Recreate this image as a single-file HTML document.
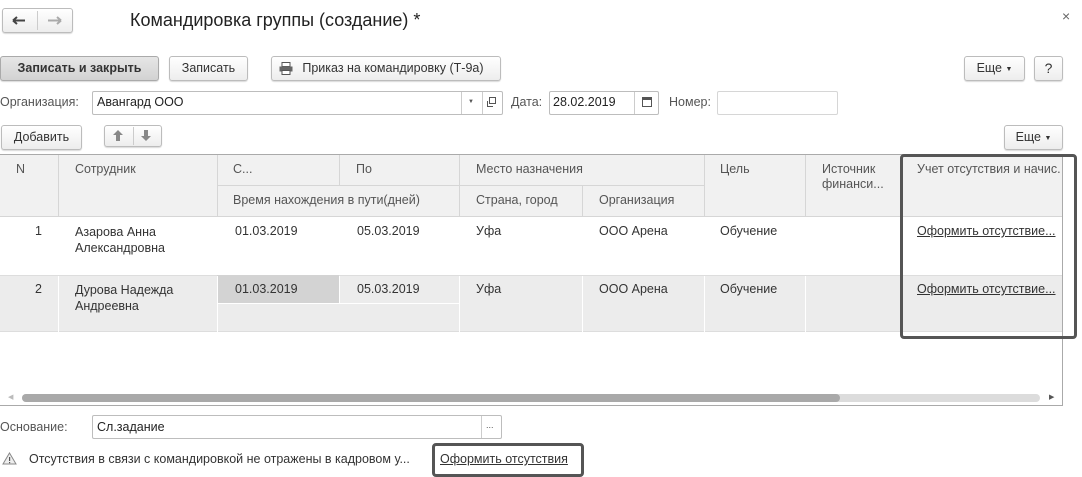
<!DOCTYPE html>
<html><head><meta charset="utf-8"><style>
*{box-sizing:border-box;margin:0;padding:0}
body{width:1082px;height:477px;background:#fff;font-family:"Liberation Sans",Arial,sans-serif;font-size:12.5px;color:#333;position:relative;overflow:hidden}
.a{position:absolute}
.btn{position:absolute;border:1px solid #bcbcbc;border-radius:3px;background:linear-gradient(#fff,#ededed);box-shadow:0 1px 1px rgba(0,0,0,.15);text-align:center;color:#333;font-size:12.5px}
.inp{position:absolute;border:1px solid #bdbdbd;border-radius:2px;background:#fff}
.hl{position:absolute;border:3px solid #555;border-radius:4px}
.vl{position:absolute;width:1px;background:#d6d6d6}
.hln{position:absolute;height:1px;background:#d6d6d6}
a{color:#333;text-decoration:underline}
</style></head><body>
<!-- nav -->
<div class="btn" style="left:2px;top:8px;width:71px;height:25px;"></div>
<div class="a" style="left:37px;top:11px;width:1px;height:19px;background:#ccc"></div>
<svg class="a" style="left:12px;top:16px" width="14" height="9"><path d="M1 4.5H13M1 4.5L5 1M1 4.5L5 8" stroke="#444" stroke-width="2" fill="none"/></svg>
<svg class="a" style="left:48px;top:16px" width="14" height="9"><path d="M0 4.5H12M13 4.5L9 1M13 4.5L9 8" stroke="#aaa" stroke-width="2" fill="none"/></svg>
<div class="a" style="left:130px;top:10px;font-size:18px;color:#222">Командировка группы (создание) *</div>
<div class="a" style="left:1062px;top:8px;font-size:14px;color:#666">×</div>

<div class="btn" style="left:0;top:56px;width:159px;height:25px;line-height:23px;font-weight:bold;background:linear-gradient(#e6e6e6,#d2d2d2);border-color:#aaa">Записать и закрыть</div>
<div class="btn" style="left:169px;top:56px;width:79px;height:25px;line-height:23px">Записать</div>
<div class="btn" style="left:271px;top:56px;width:230px;height:25px;line-height:23px">&nbsp;&nbsp;&nbsp;&nbsp;Приказ на командировку (Т-9а)</div>
<svg class="a" style="left:279px;top:62px" width="14" height="13"><rect x="3" y="0.5" width="8" height="4" fill="#fff" stroke="#555"/><rect x="0.5" y="4.5" width="13" height="5" fill="#666"/><rect x="3" y="8.5" width="8" height="4" fill="#fff" stroke="#555"/></svg>
<div class="btn" style="left:964px;top:56px;width:61px;height:25px;line-height:23px">Еще <span style="font-size:7px;vertical-align:1px">▼</span></div>
<div class="btn" style="left:1034px;top:56px;width:29px;height:25px;line-height:23px;font-size:14px">?</div>

<div class="a" style="left:0;top:95px;color:#555">Организация:</div>
<div class="inp" style="left:92px;top:91px;width:411px;height:24px;"></div>
<div class="a" style="left:97px;top:95px;color:#222">Авангард ООО</div>
<div class="a" style="left:461px;top:92px;width:1px;height:22px;background:#ccc"></div>
<div class="a" style="left:468px;top:99px;font-size:6px;color:#555">▼</div>
<div class="a" style="left:482px;top:92px;width:1px;height:22px;background:#ccc"></div>
<svg class="a" style="left:486px;top:97px" width="11" height="11"><rect x="3.5" y="0.5" width="6" height="6" fill="#fff" stroke="#555"/><path d="M1.5 4V9.5H7" stroke="#555" fill="none"/></svg>
<div class="a" style="left:511px;top:95px;color:#555">Дата:</div>
<div class="inp" style="left:549px;top:91px;width:110px;height:24px;"></div>
<div class="a" style="left:553px;top:95px;color:#222">28.02.2019</div>
<div class="a" style="left:634px;top:92px;width:1px;height:22px;background:#ccc"></div>
<div class="a" style="left:642px;top:97px;width:10px;height:10px;border:1px solid #555;border-top-width:3px"></div>
<div class="a" style="left:669px;top:95px;color:#555">Номер:</div>
<div class="inp" style="left:717px;top:91px;width:121px;height:24px;border-color:#d6d6d6"></div>

<div class="btn" style="left:1px;top:125px;width:81px;height:25px;line-height:23px">Добавить</div>
<div class="btn" style="left:104px;top:125px;width:58px;height:22px;"></div>
<div class="a" style="left:133px;top:127px;width:1px;height:18px;background:#ccc"></div>
<svg class="a" style="left:112px;top:129px" width="12" height="13"><path d="M6 1L11 6H8V12H4V6H1Z" fill="#888"/></svg>
<svg class="a" style="left:140px;top:129px" width="12" height="13"><path d="M6 12L11 7H8V1H4V7H1Z" fill="#888"/></svg>
<div class="btn" style="left:1004px;top:125px;width:59px;height:25px;line-height:23px">Еще <span style="font-size:7px;vertical-align:1px">▼</span></div>

<!-- table -->
<div class="a" style="left:0;top:154px;width:1063px;height:63px;background:#f1f1f1;border-top:1px solid #aaa;border-bottom:1px solid #d6d6d6"></div>
<div class="a" style="left:0;top:275px;width:1063px;height:57px;background:#ececec;border-top:1px solid #ddd;border-bottom:1px solid #ddd"></div>
<div class="a" style="left:217px;top:275px;width:122px;height:28px;background:#d3d3d3"></div>
<div class="vl" style="left:58px;top:155px;height:62px"></div>
<div class="vl" style="left:217px;top:155px;height:62px"></div>
<div class="vl" style="left:339px;top:155px;height:30px"></div>
<div class="vl" style="left:459px;top:155px;height:62px"></div>
<div class="vl" style="left:582px;top:186px;height:31px"></div>
<div class="vl" style="left:704px;top:155px;height:62px"></div>
<div class="vl" style="left:805px;top:155px;height:62px"></div>
<div class="hln" style="left:217px;top:185px;width:487px"></div>
<div class="vl" style="left:58px;top:276px;height:56px;background:#fff"></div>
<div class="vl" style="left:217px;top:276px;height:56px;background:#fff"></div>
<div class="vl" style="left:339px;top:276px;height:27px;background:#fff"></div>
<div class="hln" style="left:217px;top:303px;width:242px;background:#fff"></div>
<div class="vl" style="left:459px;top:276px;height:56px;background:#fff"></div>
<div class="vl" style="left:582px;top:276px;height:56px;background:#fff"></div>
<div class="vl" style="left:704px;top:276px;height:56px;background:#fff"></div>
<div class="vl" style="left:805px;top:276px;height:56px;background:#fff"></div>
<div class="vl" style="left:1062px;top:154px;height:252px;background:#aaa"></div>
<div class="hln" style="left:0;top:405px;width:1063px;background:#aaa"></div>

<div class="a" style="left:16px;top:162px;color:#555">N</div>
<div class="a" style="left:75px;top:162px;color:#555">Сотрудник</div>
<div class="a" style="left:233px;top:162px;color:#555">С...</div>
<div class="a" style="left:356px;top:162px;color:#555">По</div>
<div class="a" style="left:476px;top:162px;color:#555">Место назначения</div>
<div class="a" style="left:720px;top:162px;color:#555">Цель</div>
<div class="a" style="left:822px;top:162px;color:#555;line-height:15px">Источник<br>финанси...</div>
<div class="a" style="left:917px;top:162px;color:#555;white-space:nowrap;width:144px;overflow:hidden">Учет отсутствия и начис.</div>
<div class="a" style="left:233px;top:193px;color:#555">Время нахождения в пути(дней)</div>
<div class="a" style="left:476px;top:193px;color:#555">Страна, город</div>
<div class="a" style="left:599px;top:193px;color:#555">Организация</div>

<div class="a" style="left:35px;top:224px">1</div>
<div class="a" style="left:75px;top:224px;line-height:16px">Азарова Анна<br>Александровна</div>
<div class="a" style="left:235px;top:224px">01.03.2019</div>
<div class="a" style="left:357px;top:224px">05.03.2019</div>
<div class="a" style="left:476px;top:224px">Уфа</div>
<div class="a" style="left:599px;top:224px">ООО Арена</div>
<div class="a" style="left:720px;top:224px">Обучение</div>
<div class="a" style="left:917px;top:224px"><a>Оформить отсутствие...</a></div>

<div class="a" style="left:35px;top:282px">2</div>
<div class="a" style="left:75px;top:282px;line-height:16px">Дурова Надежда<br>Андреевна</div>
<div class="a" style="left:235px;top:282px">01.03.2019</div>
<div class="a" style="left:357px;top:282px">05.03.2019</div>
<div class="a" style="left:476px;top:282px">Уфа</div>
<div class="a" style="left:599px;top:282px">ООО Арена</div>
<div class="a" style="left:720px;top:282px">Обучение</div>
<div class="a" style="left:917px;top:282px"><a>Оформить отсутствие...</a></div>

<div class="hl" style="left:900px;top:154px;width:177px;height:185px"></div>

<!-- scrollbar -->
<div class="a" style="left:8px;top:393px;font-size:7px;color:#bbb">◀</div>
<div class="a" style="left:22px;top:394px;width:1018px;height:8px;border-radius:4px;background:#dcdcdc"></div>
<div class="a" style="left:22px;top:394px;width:818px;height:8px;border-radius:4px;background:#a9a9a9"></div>
<div class="a" style="left:1049px;top:393px;font-size:7px;color:#555">▶</div>

<div class="a" style="left:0;top:420px;color:#555">Основание:</div>
<div class="inp" style="left:92px;top:415px;width:410px;height:24px"></div>
<div class="a" style="left:97px;top:420px;color:#222">Сл.задание</div>
<div class="a" style="left:481px;top:416px;width:1px;height:22px;background:#ccc"></div>
<div class="a" style="left:486px;top:420px;font-size:9px;color:#555">...</div>

<svg class="a" style="left:2px;top:452px" width="15" height="13"><path d="M7.5 1L14 12H1Z" fill="#eee" stroke="#888"/><rect x="7" y="5" width="1.2" height="4" fill="#555"/><rect x="7" y="10" width="1.2" height="1.2" fill="#555"/></svg>
<div class="a" style="left:29px;top:452px">Отсутствия в связи с командировкой не отражены в кадровом у...</div>
<div class="a" style="left:440px;top:452px"><a>Оформить отсутствия</a></div>
<div class="hl" style="left:432px;top:443px;width:152px;height:34px"></div>
</body></html>
